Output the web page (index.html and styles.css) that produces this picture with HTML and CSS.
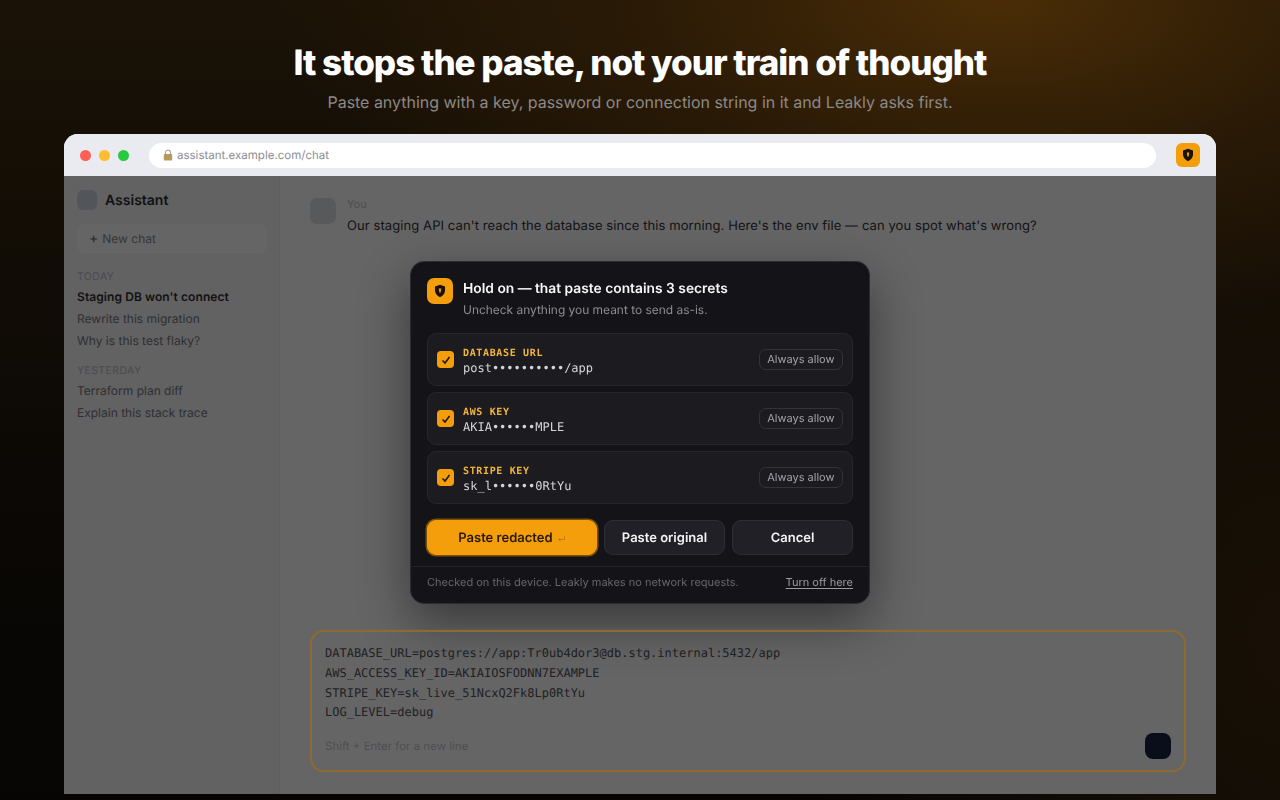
FILE: index.html
```html
<!DOCTYPE html>
<html lang="en">
<head>
<meta charset="UTF-8">
<title>Leaky</title>
<link rel="stylesheet" href="styles.css">
</head>
<body>
    <header class="hero">
        <h1>It stops the paste, not your train of thought</h1>
        <p>Paste anything with a key, password or connection string in it and Leakly asks first.</p>
    </header>

    <div class="window">
        <div class="toolbar">
            <span class="dot dot-red"></span>
            <span class="dot dot-yellow"></span>
            <span class="dot dot-green"></span>
            <div class="address">
                <svg class="lock" width="10" height="12" viewBox="0 0 10 12">
                    <path d="M2.5 5.5V3.6a2.5 2.5 0 0 1 5 0v1.9" fill="none" stroke="#a9a9a9" stroke-width="1.2"/>
                    <rect x="0.8" y="5" width="8.4" height="6.4" rx="1" fill="#b59a5a"/>
                </svg>
                <span>assistant.example.com/chat</span>
            </div>
            <div class="ext-badge">
                <svg width="12" height="14" viewBox="0 0 12 14">
                    <path d="M6 .8 11 2.6v4c0 3-2.1 5.3-5 6.6-2.9-1.3-5-3.6-5-6.6v-4z" fill="#1a1206"/>
                    <path d="M4.8 4.6h2.4L6.7 8.4H5.3z" fill="#f59e0b"/>
                </svg>
            </div>
        </div>

        <div class="app">
            <aside class="sidebar">
                <div class="brand"><span class="brand-mark"></span>Assistant</div>
                <div class="new-chat"><span class="plus">+</span>New chat</div>
                <div class="group-label">TODAY</div>
                <div class="chat-item active">Staging DB won't connect</div>
                <div class="chat-item">Rewrite this migration</div>
                <div class="chat-item">Why is this test flaky?</div>
                <div class="group-label second">YESTERDAY</div>
                <div class="chat-item">Terraform plan diff</div>
                <div class="chat-item">Explain this stack trace</div>
            </aside>

            <main class="chat">
                <div class="message">
                    <span class="avatar"></span>
                    <div>
                        <div class="author">You</div>
                        <div class="message-text">Our staging API can't reach the database since this morning. Here's the env file — can you spot what's wrong?</div>
                    </div>
                </div>
                <div class="composer">
                    <pre class="composer-text">DATABASE_URL=postgres://app:Tr0ub4dor3@db.stg.internal:5432/app
AWS_ACCESS_KEY_ID=AKIAIOSFODNN7EXAMPLE
STRIPE_KEY=sk_live_51NcxQ2Fk8Lp0RtYu
LOG_LEVEL=debug</pre>
                    <div class="composer-foot">
                        <span class="hint">Shift + Enter for a new line</span>
                        <span class="send"></span>
                    </div>
                </div>
            </main>

            <div class="scrim"></div>

            <div class="modal">
                <div class="modal-head">
                    <div class="modal-icon">
                        <svg width="12" height="14" viewBox="0 0 12 14">
                            <path d="M6 .8 11 2.6v4c0 3-2.1 5.3-5 6.6-2.9-1.3-5-3.6-5-6.6v-4z" fill="#1a1206"/>
                            <path d="M4.8 4.6h2.4L6.7 8.4H5.3z" fill="#f59e0b"/>
                        </svg>
                    </div>
                    <div>
                        <div class="modal-title">Hold on — that paste contains 3 secrets</div>
                        <div class="modal-sub">Uncheck anything you meant to send as-is.</div>
                    </div>
                </div>

                <div class="secrets">
                    <div class="secret">
                        <span class="check"><svg width="10" height="10" viewBox="0 0 10 10"><path d="M1.5 5.5 4 8l4.5-6" fill="none" stroke="#1a1206" stroke-width="1.5"/></svg></span>
                        <div class="secret-body">
                            <div class="secret-name">DATABASE URL</div>
                            <div class="secret-value">post••••••••••/app</div>
                        </div>
                        <span class="allow">Always allow</span>
                    </div>
                    <div class="secret">
                        <span class="check"><svg width="10" height="10" viewBox="0 0 10 10"><path d="M1.5 5.5 4 8l4.5-6" fill="none" stroke="#1a1206" stroke-width="1.5"/></svg></span>
                        <div class="secret-body">
                            <div class="secret-name">AWS KEY</div>
                            <div class="secret-value">AKIA••••••MPLE</div>
                        </div>
                        <span class="allow">Always allow</span>
                    </div>
                    <div class="secret">
                        <span class="check"><svg width="10" height="10" viewBox="0 0 10 10"><path d="M1.5 5.5 4 8l4.5-6" fill="none" stroke="#1a1206" stroke-width="1.5"/></svg></span>
                        <div class="secret-body">
                            <div class="secret-name">STRIPE KEY</div>
                            <div class="secret-value">sk_l••••••0RtYu</div>
                        </div>
                        <span class="allow">Always allow</span>
                    </div>
                </div>

                <div class="actions">
                    <button class="btn btn-primary">Paste redacted <span class="enter">↵</span></button>
                    <button class="btn">Paste original</button>
                    <button class="btn">Cancel</button>
                </div>

                <div class="modal-foot">
                    <span>Checked on this device. Leakly makes no network requests.</span>
                    <a class="turn-off">Turn off here</a>
                </div>
            </div>
        </div>
    </div>
</body>
</html>
```

FILE: styles.css
```css
html, body {
    height: 100%;
}

body {
    margin: 0;
    height: 800px;
    overflow: hidden;
    font-family: Inter, "Liberation Sans", sans-serif;
    text-rendering: geometricPrecision;
    background:
        radial-gradient(ellipse 720px 330px at 78% 0%, #4a2d07 0%, #2a1a06 50%, rgba(20, 14, 5, 0) 100%),
        radial-gradient(ellipse 500px 800px at 100% 80%, #181006 0%, rgba(20, 14, 5, 0) 100%),
        linear-gradient(180deg, #1a1206 0%, #0b0805 60%, #060504 100%);
    display: flex;
    flex-direction: column;
    align-items: center;
}

.hero {
    text-align: center;
    padding-top: 42px;
    height: 92px;
}

.hero h1 {
    margin: 0;
    font-size: 35px;
    line-height: 42px;
    font-weight: 800;
    letter-spacing: -1px;
    color: #fff;
}

.hero p {
    margin: 6px 0 0;
    font-size: 16px;
    line-height: 24px;
    letter-spacing: -0.02px;
    color: #8c8985;
}

.window {
    width: 1152px;
    height: 660px;
    border-radius: 14px 14px 0 0;
    overflow: hidden;
    background: #fff;
}

.toolbar {
    height: 42px;
    box-sizing: border-box;
    background: #e9ebf0;
    display: flex;
    align-items: center;
    padding: 0 16px;
    gap: 8px;
}

.dot {
    width: 11px;
    height: 11px;
    border-radius: 50%;
}

.dot-red { background: #ff5f57; }
.dot-yellow { background: #febc2e; }
.dot-green { background: #28c840; }

.address {
    flex: 1;
    height: 25px;
    margin: 0 12px;
    border-radius: 13px;
    background: #fff;
    display: flex;
    align-items: center;
    gap: 4px;
    padding-left: 14px;
    font-size: 11.5px;
    color: #8b8d94;
}

.ext-badge {
    width: 24px;
    height: 24px;
    border-radius: 6px;
    background: #f59e0b;
    display: flex;
    align-items: center;
    justify-content: center;
}

.app {
    position: relative;
    height: 618px;
    display: flex;
    background: #f8f8f9;
}

.sidebar {
    width: 216px;
    box-sizing: border-box;
    border-right: 1px solid #e2e2e5;
    background: #eeeef0;
    padding: 14px 12px 14px 13px;
    flex-shrink: 0;
}

.brand {
    display: flex;
    align-items: center;
    gap: 8px;
    font-size: 14px;
    font-weight: 600;
    color: #1c1c22;
    height: 20px;
}

.brand-mark {
    width: 20px;
    height: 20px;
    border-radius: 6px;
    background: #c4ccd9;
}

.new-chat {
    margin-top: 14px;
    height: 29px;
    border: 1px solid #fafafb;
    border-radius: 7px;
    background: #f6f6f7;
    box-sizing: border-box;
    padding-left: 11px;
    font-size: 12px;
    line-height: 27px;
    color: #7d7d82;
}

.plus {
    font-size: 14px;
    margin-right: 4px;
    color: #55555a;
}

.group-label {
    margin-top: 17px;
    font-size: 10.5px;
    letter-spacing: 0.4px;
    line-height: 14px;
    color: #b4b5ba;
}

.group-label.second {
    margin-top: 15px;
}

.chat-item {
    margin-top: 5px;
    font-size: 12px;
    line-height: 16px;
    color: #6a6a70;
    height: 16px;
}

.chat-item + .chat-item {
    margin-top: 6px;
}

.chat-item.active {
    color: #1c1c22;
    font-weight: 600;
    letter-spacing: 0.08px;
}

.chat {
    flex: 1;
    display: flex;
    flex-direction: column;
    padding: 22px 30px;
    min-width: 0;
}

.message {
    display: flex;
    gap: 11px;
}

.avatar {
    width: 26px;
    height: 26px;
    border-radius: 7px;
    background: #d6d7db;
    flex-shrink: 0;
}

.author {
    font-size: 11px;
    line-height: 13px;
    color: #b8b8be;
}

.message-text {
    margin-top: 5px;
    font-size: 13px;
    line-height: 20px;
    letter-spacing: 0.085px;
    color: #24242a;
}

.composer {
    position: relative;
    margin-top: auto;
    height: 142px;
    box-sizing: border-box;
    border: 2px solid transparent;
    border-radius: 14px;
    padding: 12px 13px 11px;
    display: flex;
    flex-direction: column;
}

/* focus ring stays bright above the scrim */
.composer::after {
    content: "";
    position: absolute;
    inset: -2px;
    z-index: 3;
    border: 2px solid #8a6a36;
    border-radius: 14px;
    box-shadow: 0 0 3px rgba(160, 110, 40, 0.35);
}

.composer-text {
    margin: 0;
    font-family: "DejaVu Sans Mono", monospace;
    font-size: 12px;
    line-height: 19.8px;
    color: #45454b;
}

.composer-foot {
    margin-top: auto;
    display: flex;
    justify-content: space-between;
    align-items: center;
}

.hint {
    font-size: 11.5px;
    color: #bbbcc1;
}

.send {
    width: 26px;
    height: 26px;
    border-radius: 8px;
    background: #0a0e1a;
    position: relative;
    z-index: 3;
}

.scrim {
    position: absolute;
    inset: 0;
    background: rgba(12, 12, 12, 0.62);
    backdrop-filter: blur(0.6px);
}

.modal {
    position: absolute;
    left: 346px;
    top: 85px;
    width: 460px;
    box-sizing: border-box;
    border: 1px solid #2c2c33;
    border-radius: 14px;
    background: #141418;
    box-shadow: 0 18px 50px rgba(0, 0, 0, 0.45);
    color: #fff;
}

.modal-head {
    display: flex;
    gap: 10px;
    padding: 16px 16px 0;
}

.modal-icon {
    width: 26px;
    height: 26px;
    border-radius: 7px;
    background: #f59e0b;
    display: flex;
    align-items: center;
    justify-content: center;
    flex-shrink: 0;
}

.modal-title {
    padding-top: 1px;
    font-size: 13.8px;
    line-height: 20px;
    font-weight: 600;
    color: #f6f6f7;
}

.modal-sub {
    margin-top: 2px;
    font-size: 11.95px;
    line-height: 18px;
    color: #8d8d94;
}

.secrets {
    margin: 14px 16px 0;
    display: flex;
    flex-direction: column;
    gap: 6px;
}

.secret {
    height: 53px;
    box-sizing: border-box;
    border: 1px solid #26262c;
    border-radius: 9px;
    background: #1b1b20;
    display: flex;
    align-items: center;
    padding: 0 9px;
    gap: 9px;
}

.check {
    width: 17px;
    height: 17px;
    border-radius: 4px;
    background: #f59e0b;
    display: flex;
    align-items: center;
    justify-content: center;
}

.secret-body {
    flex: 1;
    padding-top: 4px;
}

.secret-name {
    font-family: "DejaVu Sans Mono", monospace;
    font-size: 10px;
    font-weight: 700;
    letter-spacing: 0.65px;
    line-height: 13px;
    color: #f3b43c;
}

.secret-value {
    margin-top: 1px;
    font-family: "DejaVu Sans Mono", monospace;
    font-size: 12px;
    line-height: 15px;
    color: #d5d5d9;
}

.allow {
    height: 21px;
    box-sizing: border-box;
    border: 1px solid #33333a;
    border-radius: 7px;
    padding: 0 7.5px;
    font-size: 11px;
    line-height: 19px;
    color: #a0a0a7;
}

.actions {
    margin: 16px 16px 0;
    display: flex;
    gap: 7px;
}

.btn {
    flex: 1;
    height: 35px;
    border: 1px solid #2e2e35;
    border-radius: 9px;
    background: #202026;
    color: #f3f3f4;
    font-family: inherit;
    font-size: 13px;
    font-weight: 600;
    text-rendering: geometricPrecision;
}

.btn-primary {
    flex: 0 0 170px;
    background: #f59e0b;
    border: 1px solid #f59e0b;
    box-shadow: 0 0 0 1.5px #7a4f08;
    color: #2a1a04;
}

.enter {
    font-size: 8px;
    font-weight: 400;
    color: #a26f10;
    margin-left: 2px;
}

.modal-foot {
    margin-top: 11px;
    border-top: 1px solid #222227;
    padding: 8px 16px 14px;
    display: flex;
    justify-content: space-between;
    font-size: 11px;
    line-height: 14px;
    color: #66666d;
}

.turn-off {
    color: #9a9aa1;
    text-decoration: underline;
    text-underline-offset: 2px;
}
```
